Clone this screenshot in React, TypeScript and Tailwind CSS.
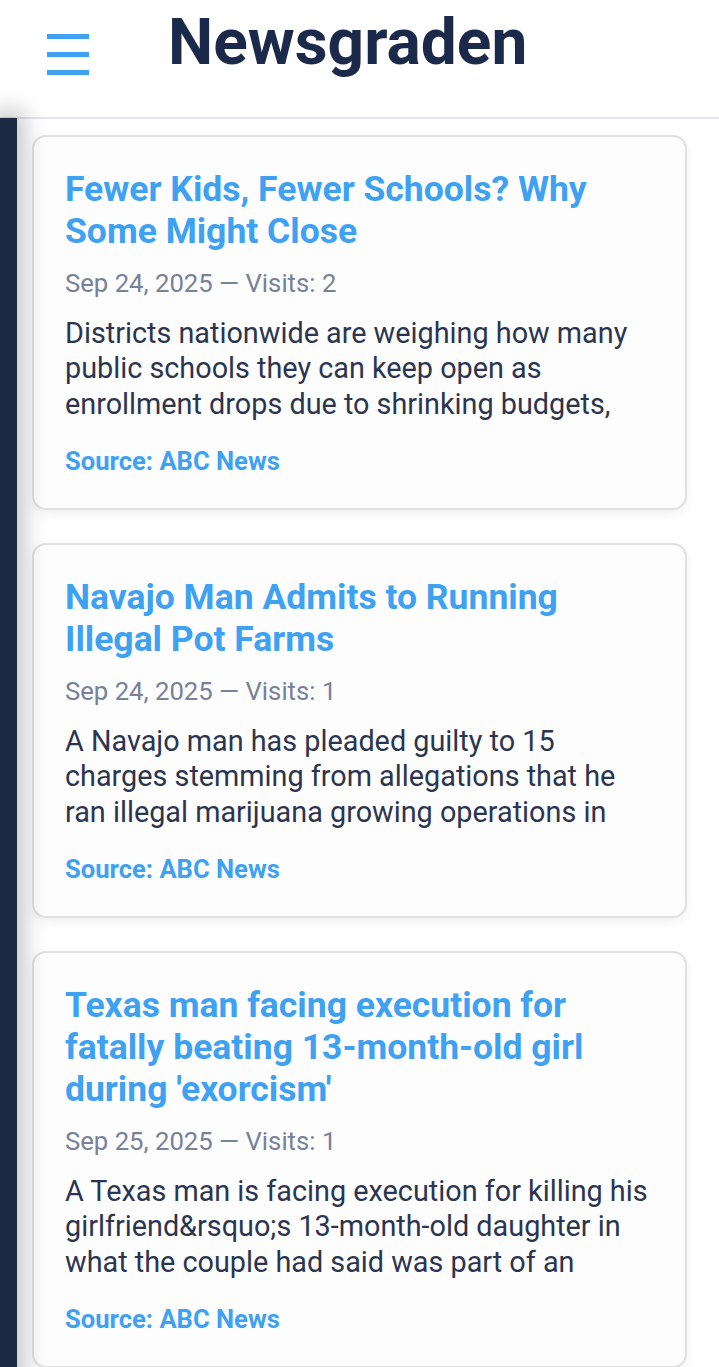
const articles = [
  {
    title: "Fewer Kids, Fewer Schools? Why Some Might Close",
    date: "Sep 24, 2025",
    visits: 2,
    summary:
      "Districts nationwide are weighing how many public schools they can keep open as enrollment drops due to shrinking budgets, falling birth rates and families leaving for other options.",
    source: "ABC News",
  },
  {
    title: "Navajo Man Admits to Running Illegal Pot Farms",
    date: "Sep 24, 2025",
    visits: 1,
    summary:
      "A Navajo man has pleaded guilty to 15 charges stemming from allegations that he ran illegal marijuana growing operations in the northwestern corner of New Mexico.",
    source: "ABC News",
  },
  {
    title: "Texas man facing execution for fatally beating 13-month-old girl during 'exorcism'",
    date: "Sep 25, 2025",
    visits: 1,
    summary:
      "A Texas man is facing execution for killing his girlfriend&rsquo;s 13-month-old daughter in what the couple had said was part of an exorcism meant to rid the girl of demons.",
    source: "ABC News",
  },
];

function Header() {
  return (
    <header className="flex h-[119px] items-start border-b-2 border-[#e2e4f4] bg-white">
      <button className="ml-[47px] mt-[34px] flex w-[42px] flex-col gap-[13px]" aria-label="menu">
        <span className="block h-[5px] w-full bg-[#3ea1f2]" />
        <span className="block h-[5px] w-full bg-[#3ea1f2]" />
        <span className="block h-[5px] w-full bg-[#3ea1f2]" />
      </button>
      <h1 className="ml-[79px] mt-[3px] text-[64px] font-bold leading-[80px] text-[#1b2a4b]">Newsgraden</h1>
    </header>
  );
}

function ArticleCard({ article }: { article: (typeof articles)[number] }) {
  return (
    <article className="rounded-[14px] border-2 border-[#e1e1e1] bg-[#fdfdfd] pb-[32px] pl-[31px] pr-[34px] pt-[31px] shadow-[0_4px_12px_rgba(0,0,0,0.06)]">
      <h2 className="text-[35.5px] font-bold leading-[42px] text-[#3ea1f2]">{article.title}</h2>
      <p className="mt-[15px] text-[25.7px] leading-[32px] text-[#778199]">
        {article.date} — Visits: {article.visits}
      </p>
      {/* summary is cut after three lines, no ellipsis */}
      <p className="mt-[17px] h-[106px] overflow-hidden text-[28.8px] leading-[35.3px] text-[#2b3550]">
        {article.summary}
      </p>
      <p className="mt-[24px] text-[25.6px] font-bold leading-[30px] text-[#3ea1f2]">Source: {article.source}</p>
    </article>
  );
}

export default function App() {
  return (
    <div className="relative min-h-screen overflow-hidden bg-white font-['Roboto',sans-serif]">
      <Header />
      <main className="flex flex-col gap-[33px] px-[32px] pt-[16px] pb-[40px]">
        {articles.map((a) => (
          <ArticleCard key={a.title} article={a} />
        ))}
      </main>
      {/* drawer peeking in from the left */}
      <aside className="absolute bottom-0 left-0 top-[118px] w-[17px] bg-[#1e2a45] shadow-[0_0_22px_8px_rgba(0,0,0,0.22)]" />
    </div>
  );
}
